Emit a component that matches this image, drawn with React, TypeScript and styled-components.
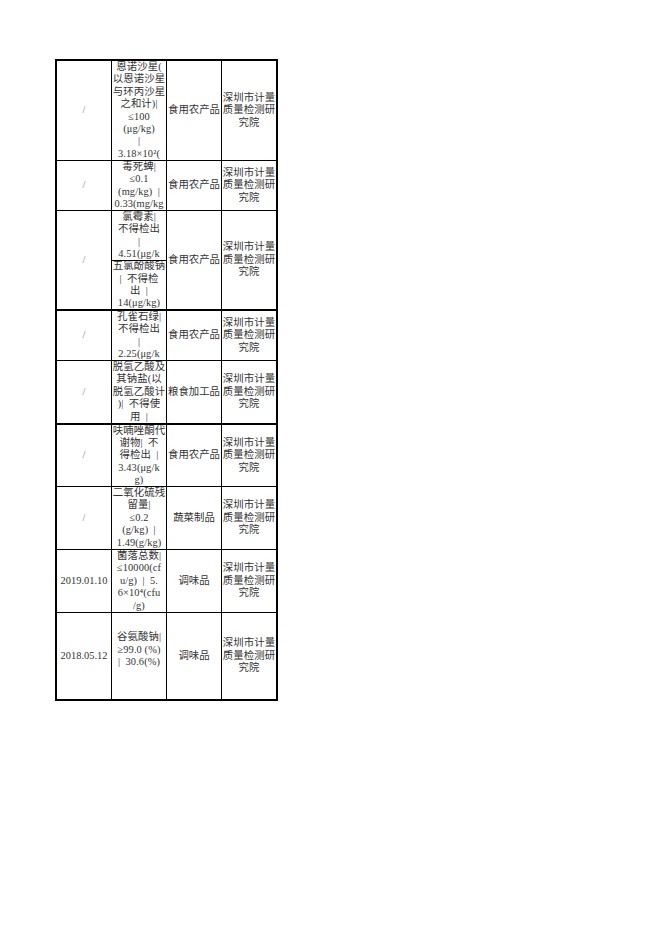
import React from "react";
import styled, { createGlobalStyle } from "styled-components";

const Global = createGlobalStyle`
  html, body { margin: 0; padding: 0; background: #fff; }
  body { font-family: "Liberation Serif", "Noto Sans CJK SC", serif; }
`;

const Page = styled.div`
  width: 662px;
  min-height: 936px;
  padding: 59px 0 0 55px;
  box-sizing: border-box;
`;

const Sheet = styled.div`
  display: grid;
  grid-template-columns: 55px 55px 55px 55px;
  grid-template-rows: 100px 50px 50px 50px 50px 64px 62px 63px 63px 87px;
  width: fit-content;
  border-top: 2px solid #000;
  border-left: 2px solid #000;
  border-right: 1px solid #000;
  border-bottom: 1px solid #000;
`;

const Cell = styled.div<{ $span?: number; $thick?: boolean; $muted?: boolean }>`
  grid-row: span ${(p) => p.$span ?? 1};
  box-sizing: border-box;
  border-right: 1px solid #000;
  border-bottom: ${(p) => (p.$thick ? 2 : 1)}px solid #000;
  display: flex;
  flex-direction: column;
  justify-content: center;
  align-items: center;
  overflow: hidden;
  font-size: 10.4px;
  line-height: 12.4px;
  color: ${(p) => (p.$muted ? "#7a7a7a" : "#333")};
  text-align: center;
`;

const Line = styled.span`
  display: block;
  white-space: pre;
  min-height: 12.4px;
  letter-spacing: 0.1px;
`;

const Lines: React.FC<{ lines: string[] }> = ({ lines }) => (
  <>
    {lines.map((l, i) => (
      <Line key={i}>{l}</Line>
    ))}
  </>
);

const LAB = ["深圳市计量", "质量检测研", "究院"];

type Row = {
  c1: string;
  c2: string[];
  c3: string;
  thick?: boolean;
};

const before: Row[] = [
  {
    c1: "/",
    c2: ["恩诺沙星(", "以恩诺沙星", "与环丙沙星", "之和计)|", "≤100", "(μg/kg)", "|", "3.18×10²("],
    c3: "食用农产品",
  },
  {
    c1: "/",
    c2: ["毒死蜱|", "≤0.1", "(mg/kg)  |", "0.33(mg/kg"],
    c3: "食用农产品",
  },
];

const after: Row[] = [
  {
    c1: "/",
    c2: ["孔雀石绿|", "不得检出", "|", "2.25(μg/k"],
    c3: "食用农产品",
  },
  {
    c1: "/",
    c2: ["脱氢乙酸及", "其钠盐(以", "脱氢乙酸计", ")|  不得使", "用  |"],
    c3: "粮食加工品",
    thick: true,
  },
  {
    c1: "/",
    c2: ["呋喃唑酮代", "谢物|  不", "得检出  |", "3.43(μg/k", "g)"],
    c3: "食用农产品",
  },
  {
    c1: "/",
    c2: ["二氧化硫残", "留量|", "≤0.2", "(g/kg)  |", "1.49(g/kg)"],
    c3: "蔬菜制品",
  },
  {
    c1: "2019.01.10",
    c2: ["菌落总数|", "≤10000(cf", "u/g)  |  5.", "6×10⁴(cfu", "/g)"],
    c3: "调味品",
  },
  {
    c1: "2018.05.12",
    c2: ["谷氨酸钠|", "≥99.0 (%)", "|  30.6(%)", ""],
    c3: "调味品",
  },
];

const RowCells: React.FC<{ row: Row }> = ({ row }) => (
  <>
    <Cell $thick={row.thick} $muted={row.c1 === "/"}>
      {row.c1}
    </Cell>
    <Cell $thick={row.thick}>
      <Lines lines={row.c2} />
    </Cell>
    <Cell $thick={row.thick}>{row.c3}</Cell>
    <Cell $thick={row.thick}>
      <Lines lines={LAB} />
    </Cell>
  </>
);

export default function App() {
  return (
    <Page>
      <Global />
      <Sheet>
        {before.map((r, i) => (
          <RowCells key={"b" + i} row={r} />
        ))}
        <Cell $span={2} $thick $muted>
          /
        </Cell>
        <Cell>
          <Lines lines={["氯霉素|", "不得检出", "|", "4.51(μg/k"]} />
        </Cell>
        <Cell $span={2} $thick>
          食用农产品
        </Cell>
        <Cell $span={2} $thick>
          <Lines lines={LAB} />
        </Cell>
        <Cell $thick>
          <Lines lines={["五氯酚酸钠", "|  不得检", "出  |", "14(μg/kg)"]} />
        </Cell>
        {after.map((r, i) => (
          <RowCells key={"a" + i} row={r} />
        ))}
      </Sheet>
    </Page>
  );
}
